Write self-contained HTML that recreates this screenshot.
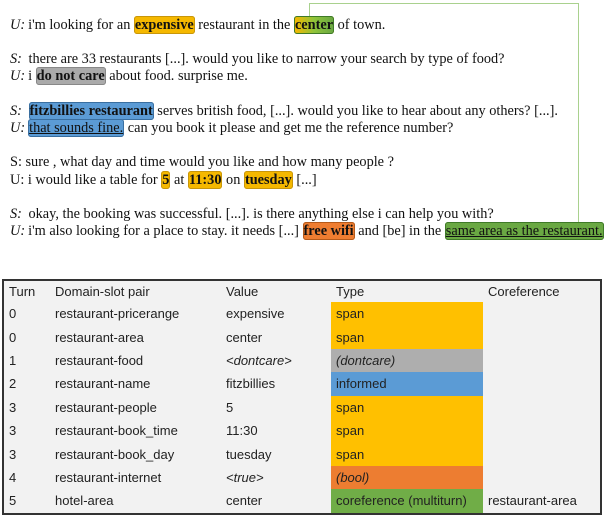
<!DOCTYPE html>
<html><head><style>
body{margin:0;width:604px;height:514px;background:#fff;position:relative;overflow:hidden;font-family:"Liberation Serif",serif;font-size:14.3px;color:#111}
.l{position:absolute;left:10px;white-space:nowrap;line-height:16px}
i.s{font-style:italic;margin-right:3px}
.h{border-radius:3px;padding:0;font-weight:bold;border:1px solid}
.y{background:#f5b800;border-color:#c8960a}
.g{background:#aaa;border-color:#888}
.b{background:#5b9bd5;border-color:#3a6fa0}
.o{background:#ee7d31;border-color:#b55a1a}
.gr{background:#6aa843;border-color:#3f7a28;font-weight:normal;text-decoration:underline}
.c{background:linear-gradient(90deg,#f5b800,#8fc43a 50%,#6aa843);border-color:#3f7a28}
table{position:absolute;left:2px;top:279px;width:600px;height:234px;border:2px solid #333;border-collapse:collapse;background:#f2f2f2;font-family:"Liberation Sans",sans-serif;font-size:13px;color:#222}
td{padding:0 0 0 5px;height:23.4px;white-space:nowrap}
tr.hd td{height:21px}
.ty{background:#ffc000}.tg{background:#aeaeae}.tb{background:#5b9bd5}.to{background:#ed7d31}.tgr{background:#70ad47}
</style></head><body>
<div style="position:absolute;left:309px;top:3px;width:269px;height:221px;border-top:1px solid #a9d18e;border-right:1px solid #a9d18e"></div>
<div style="position:absolute;left:309px;top:3px;width:1px;height:16px;background:#a9d18e"></div>
<div class="l" style="top:17px"><i class="s">U:</i>i'm looking for an <span class="h y">expensive</span> restaurant in the <span class="h c">center</span> of town.</div>
<div class="l" style="top:51px"><i class="s">S:</i> there are 33 restaurants [...]. would you like to narrow your search by type of food?</div>
<div class="l" style="top:68px"><i class="s">U:</i>i <span class="h g">do not care</span> about food. surprise me.</div>
<div class="l" style="top:103px"><i class="s">S:</i> <span class="h b">fitzbillies restaurant</span> serves british food, [...]. would you like to hear about any others? [...].</div>
<div class="l" style="top:120px"><i class="s">U:</i><span class="h b" style="font-weight:normal;text-decoration:underline">that sounds fine.</span> can you book it please and get me the reference number?</div>
<div class="l" style="top:154px">S: sure , what day and time would you like and how many people ?</div>
<div class="l" style="top:172px">U: i would like a table for <span class="h y">5</span> at <span class="h y">11:30</span> on <span class="h y">tuesday</span> [...]</div>
<div class="l" style="top:206px"><i class="s">S:</i> okay, the booking was successful. [...]. is there anything else i can help you with?</div>
<div class="l" style="top:223px"><i class="s">U:</i>i'm also looking for a place to stay. it needs [...] <span class="h o">free wifi</span> and [be] in the <span class="h gr">same area as the restaurant.</span></div>
<table>
<colgroup><col style="width:47px"><col style="width:171px"><col style="width:110px"><col style="width:152px"><col></colgroup>
<tr class="hd"><td>Turn</td><td>Domain-slot pair</td><td>Value</td><td>Type</td><td>Coreference</td></tr>
<tr><td>0</td><td>restaurant-pricerange</td><td>expensive</td><td class="ty">span</td><td></td></tr>
<tr><td>0</td><td>restaurant-area</td><td>center</td><td class="ty">span</td><td></td></tr>
<tr><td>1</td><td>restaurant-food</td><td><i>&lt;dontcare&gt;</i></td><td class="tg"><i>(dontcare)</i></td><td></td></tr>
<tr><td>2</td><td>restaurant-name</td><td>fitzbillies</td><td class="tb">informed</td><td></td></tr>
<tr><td>3</td><td>restaurant-people</td><td>5</td><td class="ty">span</td><td></td></tr>
<tr><td>3</td><td>restaurant-book_time</td><td>11:30</td><td class="ty">span</td><td></td></tr>
<tr><td>3</td><td>restaurant-book_day</td><td>tuesday</td><td class="ty">span</td><td></td></tr>
<tr><td>4</td><td>restaurant-internet</td><td><i>&lt;true&gt;</i></td><td class="to"><i>(bool)</i></td><td></td></tr>
<tr><td>5</td><td>hotel-area</td><td>center</td><td class="tgr">coreference (multiturn)</td><td>restaurant-area</td></tr>
</table>
</body></html>
